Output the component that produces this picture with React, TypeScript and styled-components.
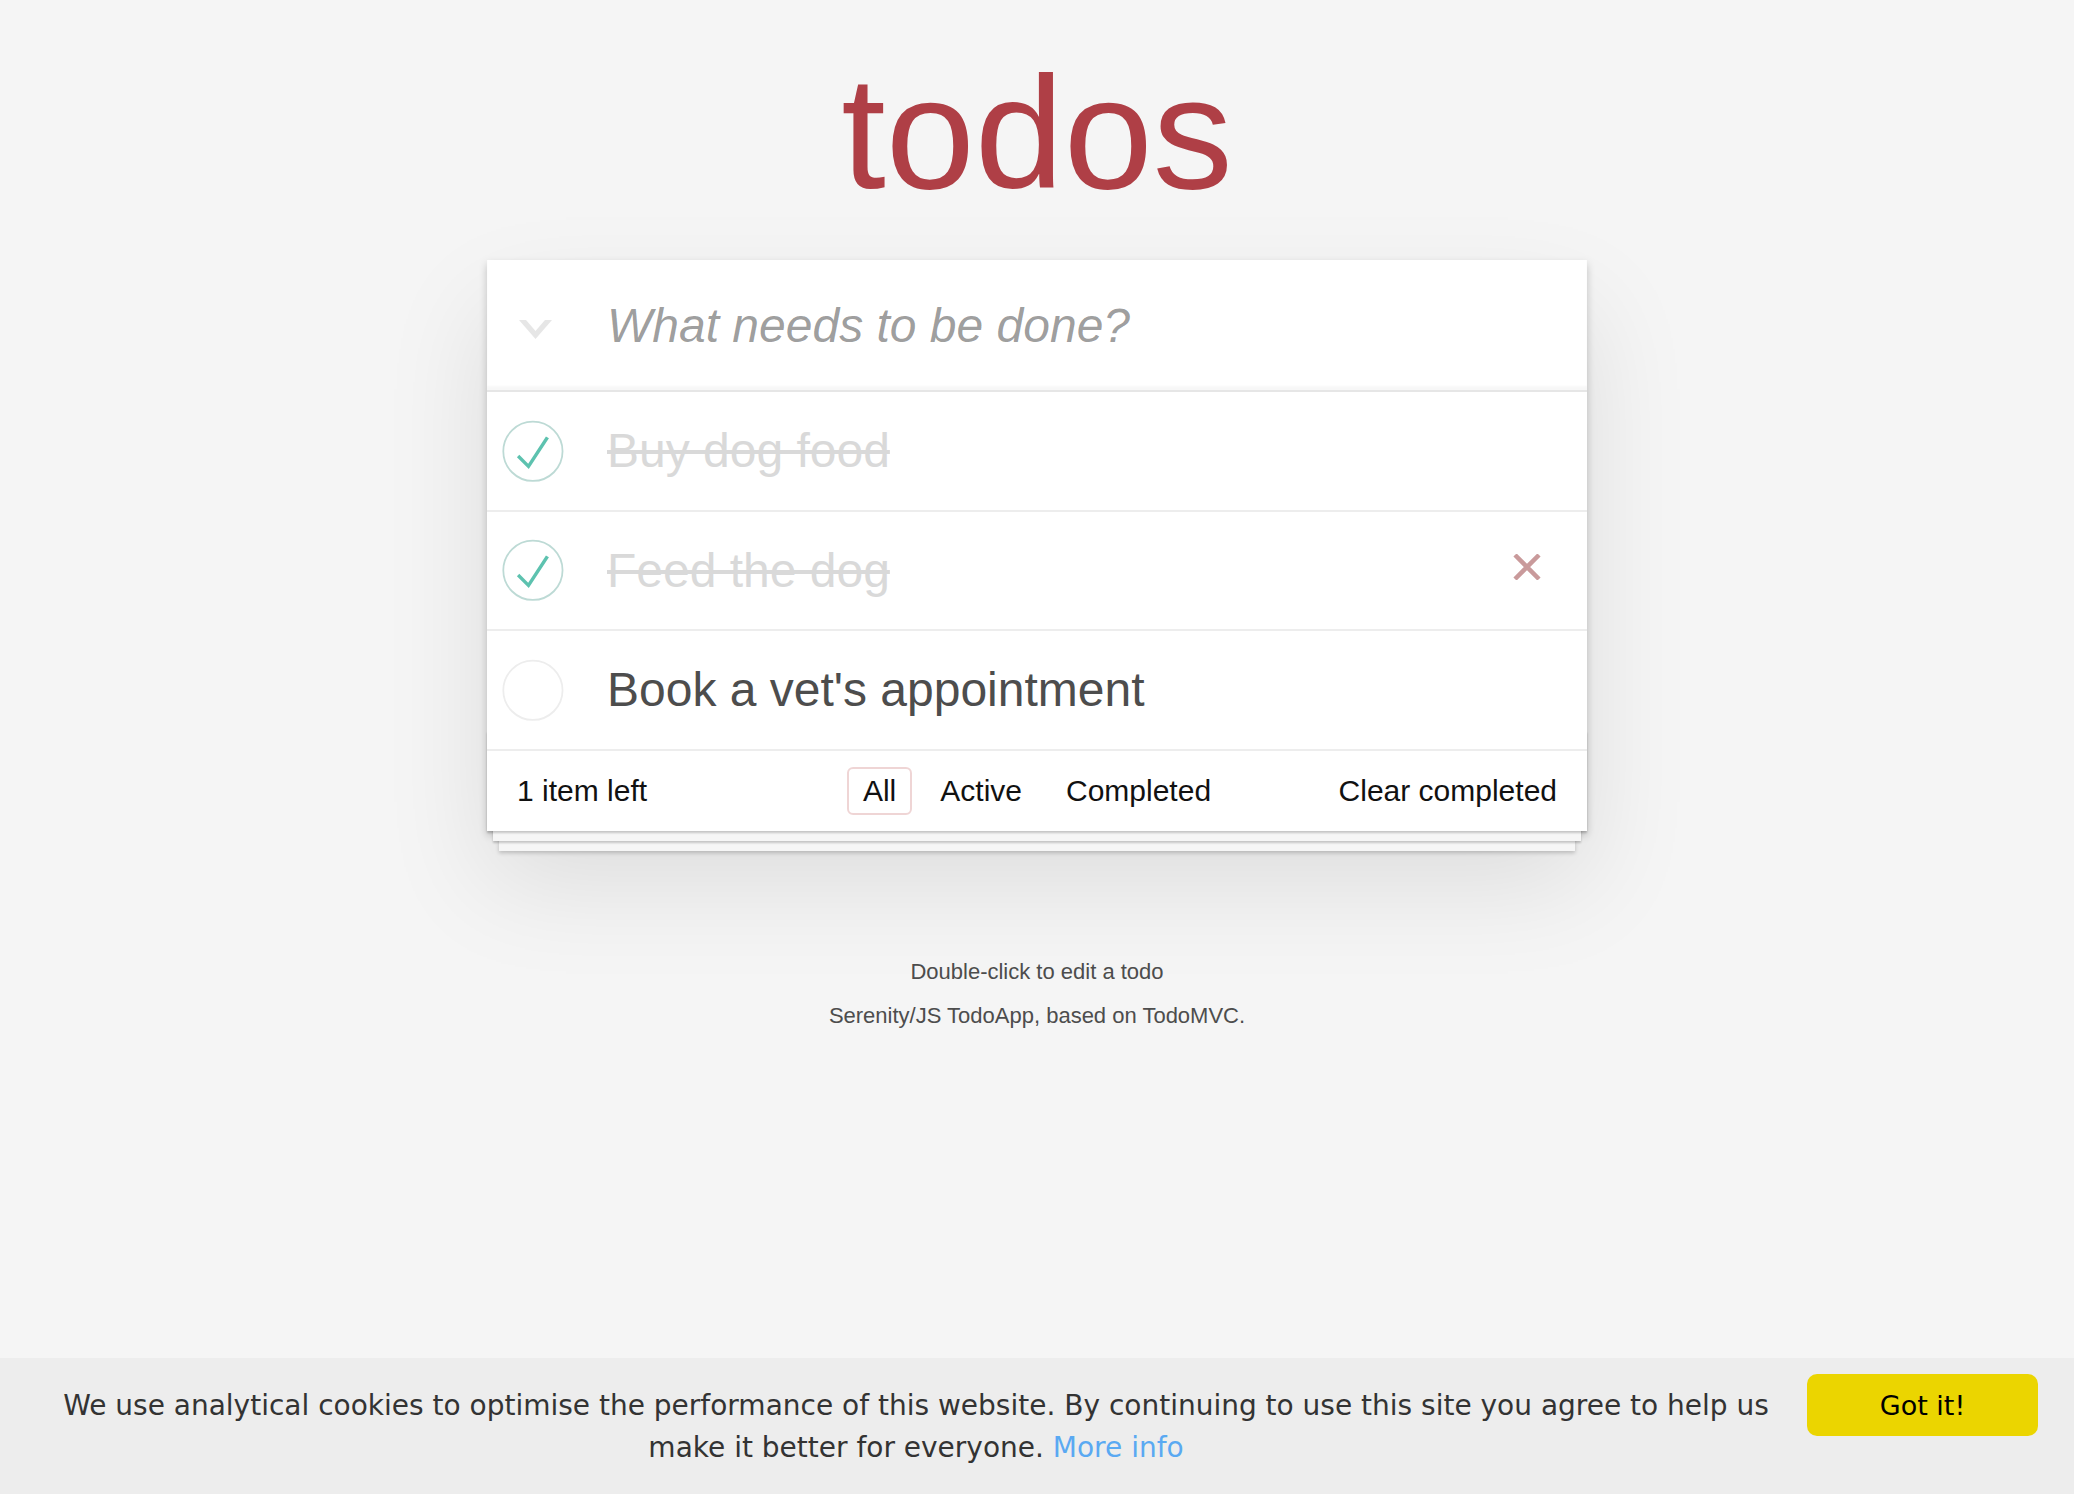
import React from "react";
import styled, { createGlobalStyle } from "styled-components";

const GlobalStyle = createGlobalStyle`
  html, body {
    margin: 0;
    padding: 0;
    background: #f5f5f5;
  }
  body {
    font-family: "Liberation Sans", Arial, sans-serif;
    color: #111;
    min-height: 1494px;
  }
`;

const Page = styled.div`
  width: 1100px;
  margin: 0 auto;
  padding-top: 53px;
`;

const Title = styled.h1`
  margin: 0 0 47px 0;
  height: 160px;
  font-size: 160px;
  line-height: 160px;
  font-weight: 400;
  text-align: center;
  color: #af3f46;
`;

const Card = styled.section`
  position: relative;
  background: #fff;
  box-shadow: 0 4px 8px 0 rgba(0, 0, 0, 0.2), 0 50px 100px 0 rgba(0, 0, 0, 0.1);
`;

const Header = styled.header`
  display: flex;
  align-items: center;
  height: 130px;
  box-shadow: inset 0 -4px 2px rgba(0, 0, 0, 0.03);
  border-bottom: 2px solid #e6e6e6;
`;

const ToggleAll = styled.div`
  width: 96px;
  display: flex;
  justify-content: center;
  padding-top: 8px;
`;

const NewTodo = styled.input`
  flex: 1;
  border: none;
  outline: none;
  background: transparent;
  padding: 0 0 0 24px;
  font-family: "Liberation Sans", Arial, sans-serif;
  font-size: 48px;
  line-height: 67px;
  color: #4d4d4d;

  &::placeholder {
    font-style: italic;
    color: rgba(0, 0, 0, 0.4);
  }
`;

const List = styled.ul`
  margin: 0;
  padding: 0;
  list-style: none;
`;

const Row = styled.li`
  display: flex;
  align-items: center;
  border-bottom: 2px solid #ededed;
`;

const Toggle = styled.svg`
  flex: 0 0 80px;
  width: 80px;
  height: 80px;
`;

const Label = styled.label<{ $done: boolean }>`
  flex: 1;
  padding: 30px 30px 30px 40px;
  font-size: 48px;
  line-height: 1.2;
  color: ${(p) => (p.$done ? "#d9d9d9" : "#4d4d4d")};
  text-decoration: ${(p) => (p.$done ? "line-through" : "none")};
`;

const Destroy = styled.button`
  width: 80px;
  height: 80px;
  margin-right: 20px;
  margin-bottom: 6px;
  padding: 0;
  border: none;
  background: none;
  display: flex;
  align-items: center;
  justify-content: center;
`;

const Footer = styled.footer`
  position: relative;
  display: grid;
  grid-template-columns: 1fr auto 1fr;
  grid-template-rows: 40px;
  align-items: center;
  height: 40px;
  padding: 20px 30px;
  font-size: 30px;
  line-height: 42px;
  color: #111;

  &:before {
    content: "";
    position: absolute;
    right: 0;
    bottom: 0;
    left: 0;
    height: 100px;
    pointer-events: none;
    box-shadow: 0 2px 2px rgba(0, 0, 0, 0.2), 0 16px 0 -6px #f6f6f6,
      0 18px 2px -6px rgba(0, 0, 0, 0.2), 0 32px 0 -12px #f6f6f6,
      0 34px 4px -12px rgba(0, 0, 0, 0.2);
  }
`;

const Count = styled.span`
  justify-self: start;
`;

const Filters = styled.ul`
  display: flex;
  align-items: center;
  margin: 0;
  padding: 0;
  list-style: none;

  li {
    display: flex;
  }
`;

const FilterLink = styled.a<{ $selected: boolean }>`
  display: block;
  margin: 6px;
  padding: 6px 14px;
  line-height: 32px;
  color: inherit;
  text-decoration: none;
  border: 2px solid ${(p) => (p.$selected ? "rgba(175, 47, 47, 0.2)" : "transparent")};
  border-radius: 6px;
  cursor: pointer;
`;

const ClearCompleted = styled.button`
  justify-self: end;
  border: none;
  background: none;
  padding: 0;
  font: inherit;
  line-height: 38px;
  color: inherit;
  cursor: pointer;
`;

const Info = styled.footer`
  margin-top: 130px;
  display: flex;
  flex-direction: column;
  gap: 22px;
  text-align: center;
  font-size: 22px;
  line-height: 22px;
  color: #4d4d4d;

  p {
    margin: 0;
  }
`;

const Banner = styled.div`
  position: fixed;
  left: 0;
  right: 0;
  bottom: 0;
  height: 136px;
  box-sizing: border-box;
  display: flex;
  align-items: flex-start;
  padding: 16px 36px 0 30px;
  background: #ededed;
  font-family: "DejaVu Sans", Verdana, sans-serif;
`;

const Message = styled.p`
  flex: 1;
  margin: 0;
  padding-top: 11px;
  text-align: center;
  font-size: 28px;
  line-height: 42px;
  color: #333;

  a {
    color: #5aa9f2;
    text-decoration: none;
  }
`;

const GotIt = styled.button`
  flex: 0 0 231px;
  height: 62px;
  margin-left: 5px;
  border: none;
  border-radius: 10px;
  background: #ebd500;
  color: #000;
  font-family: "DejaVu Sans", Verdana, sans-serif;
  font-size: 27px;
  cursor: pointer;
`;

const todos = [
  { title: "Buy dog food", done: true },
  { title: "Feed the dog", done: true, hover: true },
  { title: "Book a vet's appointment", done: false },
];

const Check = ({ done }: { done: boolean }) => (
  <Toggle viewBox="-10 -18 100 135">
    <circle cx="50" cy="50" r="50" fill="none" stroke={done ? "#bddad5" : "#ededed"} strokeWidth="3" />
    {done && <path fill="#5dc2af" d="M72 25L42 71 27 56l-4 4 20 20 34-52z" />}
  </Toggle>
);

export default function App() {
  const [filter, setFilter] = React.useState("All");
  const left = todos.filter((t) => !t.done).length;

  return (
    <>
      <GlobalStyle />
      <Page>
        <Title>todos</Title>
        <Card>
          <Header>
            <ToggleAll>
              <svg width="33" height="19" viewBox="0 0 33 19">
                <polygon points="0,0 7,0 16.5,10.9 26,0 33,0 16.5,19" fill="#e6e6e6" />
              </svg>
            </ToggleAll>
            <NewTodo placeholder="What needs to be done?" />
          </Header>
          <List>
            {todos.map((t) => (
              <Row key={t.title}>
                <Check done={t.done} />
                <Label $done={t.done}>{t.title}</Label>
                {t.hover && (
                  <Destroy aria-label="delete">
                    <svg width="28" height="26" viewBox="0 0 28 26">
                      <path d="M2 1 L26 25 M26 1 L2 25" stroke="#c99a9b" strokeWidth="4.5" />
                    </svg>
                  </Destroy>
                )}
              </Row>
            ))}
          </List>
          <Footer>
            <Count>{left} item left</Count>
            <Filters>
              {["All", "Active", "Completed"].map((f) => (
                <li key={f}>
                  <FilterLink $selected={filter === f} onClick={() => setFilter(f)}>
                    {f}
                  </FilterLink>
                </li>
              ))}
            </Filters>
            <ClearCompleted>Clear completed</ClearCompleted>
          </Footer>
        </Card>
        <Info>
          <p>Double-click to edit a todo</p>
          <p>Serenity/JS TodoApp, based on TodoMVC.</p>
        </Info>
      </Page>
      <Banner>
        <Message>
          We use analytical cookies to optimise the performance of this website. By continuing to use this site you
          agree to help us make it better for everyone. <a href="#">More info</a>
        </Message>
        <GotIt>Got it!</GotIt>
      </Banner>
    </>
  );
}
